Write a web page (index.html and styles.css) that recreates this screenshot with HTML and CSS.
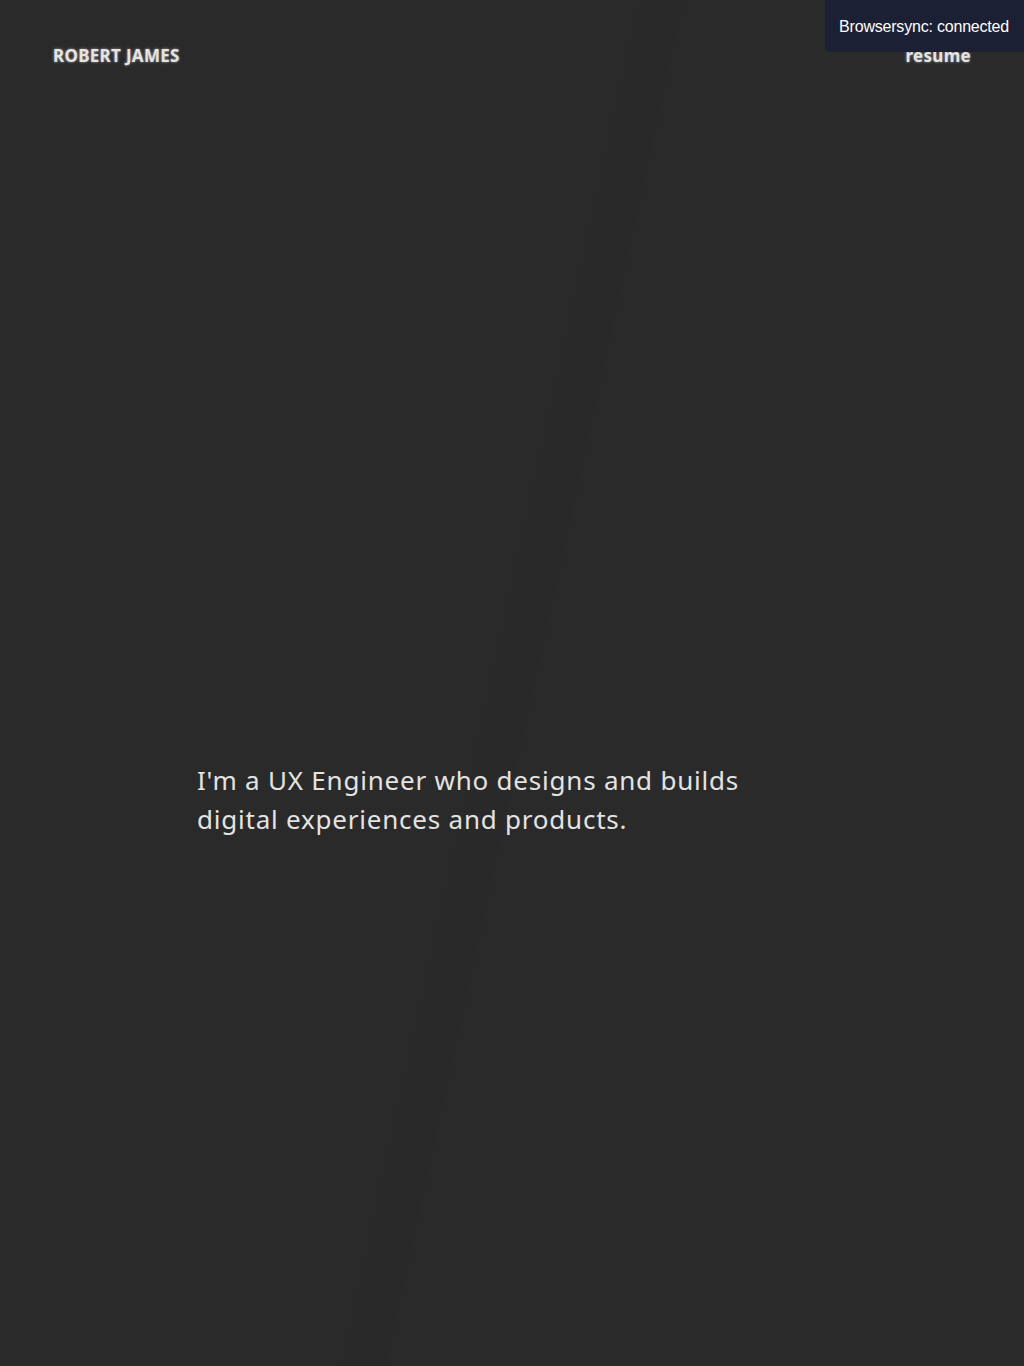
FILE: index.html
```html
<!DOCTYPE html>
<html lang="en">
<head>
<meta charset="utf-8">
<title>Robert James</title>
<link rel="stylesheet" href="styles.css">
</head>
<body>
<div class="page">
  <header class="header">
    <a class="brand" href="#">ROBERT JAMES</a>
    <a class="nav-link" href="#">resume</a>
  </header>
  <main class="hero">
    <p class="intro">I'm a UX Engineer who designs and builds<br>digital experiences and products.</p>
  </main>
</div>
<div class="bs-notify">Browsersync: connected</div>
</body>
</html>
```
FILE: styles.css
```css
html, body {
  margin: 0;
  padding: 0;
}
body {
  background-color: #2a2a2a;
  background-image: linear-gradient(102.3deg, rgba(0,0,0,0) 46%, rgba(0,0,0,0.02) 50%, rgba(0,0,0,0.035) 51.3%, rgba(0,0,0,0) 52%);
  min-height: 1366px;
  color: #e2e2e2;
  font-family: "Noto Sans", "Open Sans", sans-serif;
}
.page {
  min-height: 1366px;
  display: flex;
  flex-direction: column;
}
.header {
  display: flex;
  justify-content: space-between;
  align-items: center;
  padding: 42px 53px 0 53px;
  height: 26px;
}
.brand, .nav-link {
  color: #e4e4e4;
  text-decoration: none;
  font-weight: 700;
  font-size: 17px;
  letter-spacing: 0.3px;
  text-shadow: 0 0 3px rgba(255,255,255,0.55);
}
.hero {
  padding: 0 0 0 197px;
  margin-top: 693px;
}
.intro {
  margin: 0;
  font-size: 26px;
  line-height: 39px;
  letter-spacing: 0.78px;
  color: #e3e3e3;
  font-weight: 400;
}
.bs-notify {
  position: fixed;
  top: 0;
  right: 0;
  background: #1c2035;
  color: #ffffff;
  font-family: "Liberation Sans", Arial, sans-serif;
  font-size: 16px;
  letter-spacing: -0.2px;
  padding: 17px 15px 16px 14px;
  border-bottom-left-radius: 5px;
  line-height: 19px;
}
```
